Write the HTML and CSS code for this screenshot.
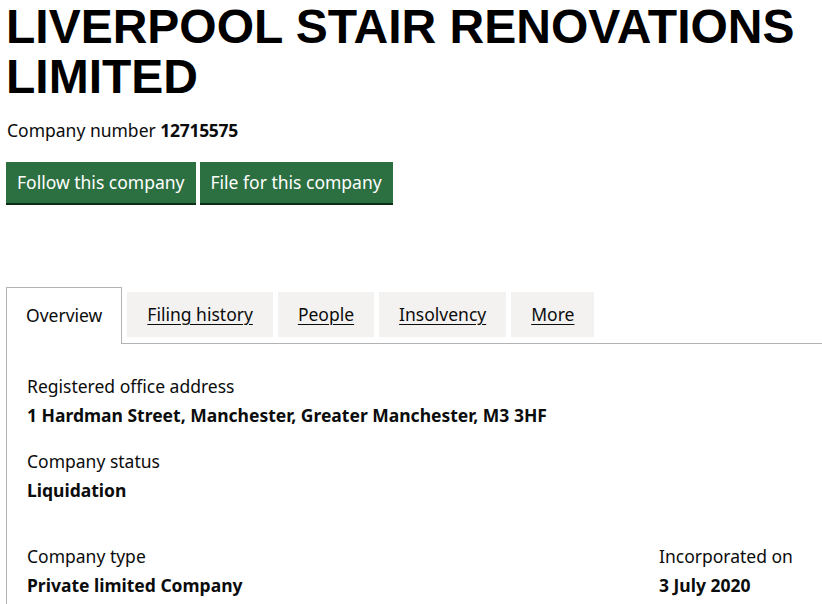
FILE: index.html
```html
<!DOCTYPE html>
<html lang="en">
<head>
<meta charset="utf-8">
<title>LIVERPOOL STAIR RENOVATIONS LIMITED</title>
<link rel="stylesheet" href="styles.css">
</head>
<body>
<main class="page">
  <h1 class="heading">LIVERPOOL STAIR RENOVATIONS LIMITED</h1>
  <p class="company-number">Company number <strong>12715575</strong></p>
  <div class="actions">
    <a class="button" href="#">Follow this company</a>
    <a class="button" href="#">File for this company</a>
  </div>
  <div class="tabs">
    <ul class="tab-list">
      <li class="tab tab-selected"><a href="#">Overview</a></li>
      <li class="tab"><a href="#">Filing history</a></li>
      <li class="tab"><a href="#">People</a></li>
      <li class="tab"><a href="#">Insolvency</a></li>
      <li class="tab"><a href="#">More</a></li>
    </ul>
    <section class="panel">
      <dl class="field">
        <dt>Registered office address</dt>
        <dd>1 Hardman Street, Manchester, Greater Manchester, M3 3HF</dd>
      </dl>
      <dl class="field">
        <dt>Company status</dt>
        <dd>Liquidation</dd>
      </dl>
      <div class="row">
        <dl class="field field-last">
          <dt>Company type</dt>
          <dd>Private limited Company</dd>
        </dl>
        <dl class="field field-last field-right">
          <dt>Incorporated on</dt>
          <dd>3 July 2020</dd>
        </dl>
      </div>
    </section>
  </div>
</main>
</body>
</html>
```

FILE: styles.css
```css
html, body {
  margin: 0;
  padding: 0;
  background: #ffffff;
}
body {
  font-family: "Noto Sans", "Liberation Sans", sans-serif;
  color: #0b0c0c;
  font-size: 17.5px;
}
.page {
  padding: 0 0 0 6px;
}
.heading {
  font-family: "Liberation Sans", Arial, sans-serif;
  font-weight: 700;
  font-size: 48px;
  line-height: 50px;
  margin: 2px 0 0 0;
  color: #000;
}
.company-number {
  margin: 16px 0 0 1px;
  line-height: 25px;
}
.company-number strong {
  font-weight: 700;
  letter-spacing: -0.3px;
}
.actions {
  display: flex;
  gap: 4px;
  margin-top: 19px;
}
.button {
  display: block;
  background: #2c6f41;
  color: #fff;
  text-decoration: none;
  line-height: 25px;
  padding: 8px 11px 8px 11px;
  box-shadow: 0 2px 0 #0c2e17;
  height: 25px;
}
.tabs {
  margin-top: 84px;
}
.tab-list {
  list-style: none;
  margin: 0;
  padding: 0;
  display: flex;
  align-items: flex-start;
  gap: 5px;
  border-bottom: 1px solid #b1b4b6;
}
.tab {
  background: #f3f2f1;
  margin-top: 5px;
  height: 45px;
  display: flex;
  align-items: center;
  padding: 0 20px;
}
.tab a {
  color: #0b0c0c;
  text-decoration: underline;
  text-underline-offset: 3px;
  text-decoration-thickness: 1px;
  margin-top: -2px;
}
.tab-selected {
  background: #fff;
  margin-top: 0;
  height: 55px;
  margin-bottom: -1px;
  border: 1px solid #b1b4b6;
  border-bottom: 0;
  padding: 0 19px 1px 19px;
  align-items: flex-start;
}
.tab-selected a {
  text-decoration: none;
  margin-top: 15px;
}
.panel {
  border-left: 1px solid #b1b4b6;
  padding: 30px 20px 6px 20px;
}
.field {
  margin: 0 0 21px 0;
}
.field-last {
  margin-bottom: 0;
}
.field dt {
  line-height: 25px;
  margin: 0 0 4px 0;
}
.field dd {
  margin: 0;
  font-weight: 700;
  line-height: 25px;
}
.row {
  display: flex;
  justify-content: space-between;
  margin-top: 41px;
}
.field-right {
  width: 143px;
}
```
